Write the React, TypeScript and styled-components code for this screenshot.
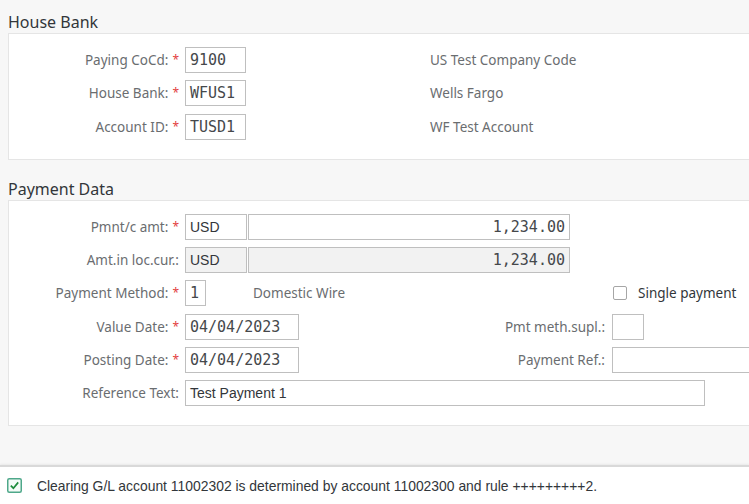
import React from 'react';
import styled, { createGlobalStyle } from 'styled-components';

const GlobalStyle = createGlobalStyle`
  html, body {
    margin: 0;
    padding: 0;
    background: #f7f7f7;
  }
`;

const Page = styled.div`
  width: 749px;
  height: 504px;
  overflow: hidden;
  display: flex;
  flex-direction: column;
  background: #f7f7f7;
  font-family: 'Noto Sans', 'Liberation Sans', sans-serif;
`;

const Content = styled.div`
  width: 860px;
  padding-left: 8px;
`;

const SectionTitle = styled.h2<{ $first?: boolean }>`
  margin: ${({ $first }) => ($first ? '12px 0 1px' : '19px 0 1px')};
  height: 20px;
  line-height: 20px;
  font-size: 16px;
  font-weight: 400;
  color: #32363a;
`;

const Panel = styled.div`
  background: #ffffff;
  border: 1px solid #e5e5e5;
  padding: 13px 0 19px;
  display: flex;
  flex-direction: column;
  gap: 7.33px;
`;

const FormRow = styled.div<{ $cols: string }>`
  display: grid;
  grid-template-columns: ${({ $cols }) => $cols};
  align-items: center;
  height: 26px;
`;

const Label = styled.div<{ $required?: boolean; $pad?: number }>`
  text-align: right;
  padding-right: ${({ $pad }) => $pad ?? 6}px;
  font-size: 13.5px;
  color: #6a6d70;
  white-space: nowrap;

  ${({ $required }) =>
    $required &&
    `
    &::after {
      content: '*';
      display: inline-block;
      font-size: 12px;
      color: #e34040;
      margin-left: 4px;
      transform: translateY(-1px);
    }
  `}
`;

const Input = styled.div<{ $w: number; $mono?: boolean; $gray?: boolean; $right?: boolean }>`
  box-sizing: border-box;
  width: ${({ $w }) => $w}px;
  height: 26px;
  border: 1px solid #bfbfbf;
  background: ${({ $gray }) => ($gray ? '#f2f2f2' : '#ffffff')};
  padding: 0 4px;
  display: flex;
  align-items: center;
  justify-content: ${({ $right }) => ($right ? 'flex-end' : 'flex-start')};
  font-family: ${({ $mono }) =>
    $mono ? "'DejaVu Sans Mono', monospace" : "'Liberation Sans', Arial, sans-serif"};
  font-size: ${({ $mono }) => ($mono ? '15px' : '14px')};
  color: ${({ $mono }) => ($mono ? '#45484b' : '#32363a')};
  white-space: nowrap;
`;

const FieldGroup = styled.div<{ $span?: boolean; $gap?: number }>`
  display: flex;
  align-items: center;
  gap: ${({ $gap }) => $gap ?? 0}px;
  ${({ $span }) => $span && 'grid-column: 2 / -1;'}
`;

const Description = styled.span<{ $offset?: number }>`
  font-size: 13.5px;
  color: #6a6d70;
  margin-left: ${({ $offset }) => $offset ?? 0}px;
  white-space: nowrap;
`;

const CheckField = styled.label`
  display: flex;
  align-items: center;
  gap: 11px;
  margin-left: 1px;
  font-size: 13.5px;
  color: #32363a;
  white-space: nowrap;
`;

const CheckBox = styled.span`
  box-sizing: border-box;
  width: 14px;
  height: 14px;
  border: 1px solid #a6a6a6;
  border-radius: 2px;
  background: #fff;
`;

const Spacer = styled.div`
  flex: 1;
`;

const MessageBar = styled.div`
  height: 37px;
  border-top: 2px solid #d9d9d9;
  box-shadow: 0 -1px 2px rgba(0, 0, 0, 0.06);
  background: #ffffff;
  display: flex;
  align-items: center;
  gap: 15px;
  padding-left: 7px;
  font-family: 'Liberation Sans', Arial, sans-serif;
  font-size: 13.9px;
  color: #32363a;
`;

const SuccessIcon = () => (
  <svg width="15" height="15" viewBox="0 0 15 15">
    <rect x="0.75" y="0.75" width="13.5" height="13.5" rx="1.5" fill="#f4fbf7" stroke="#4ea88a" strokeWidth="1.5" />
    <path d="M3.8 7.6 L6.4 10.2 L11.2 4.4" fill="none" stroke="#1d8c3c" strokeWidth="1.7" />
  </svg>
);

const bankCols = '176px 245px 1fr';
const payCols = '176px 250px 177px 1fr';

interface BankRow {
  label: string;
  value: string;
  description: string;
}

const bankRows: BankRow[] = [
  { label: 'Paying CoCd:', value: '9100', description: 'US Test Company Code' },
  { label: 'House Bank:', value: 'WFUS1', description: 'Wells Fargo' },
  { label: 'Account ID:', value: 'TUSD1', description: 'WF Test Account' },
];

const App: React.FC = () => {
  return (
    <Page>
      <GlobalStyle />
      <Content>
        <SectionTitle $first>House Bank</SectionTitle>
        <Panel>
          {bankRows.map((row) => (
            <FormRow key={row.label} $cols={bankCols}>
              <Label $required>{row.label}</Label>
              <Input $w={61} $mono>
                {row.value}
              </Input>
              <Description>{row.description}</Description>
            </FormRow>
          ))}
        </Panel>

        <SectionTitle>Payment Data</SectionTitle>
        <Panel>
          <FormRow $cols={payCols}>
            <Label $required>Pmnt/c amt:</Label>
            <FieldGroup $span $gap={1}>
              <Input $w={62}>USD</Input>
              <Input $w={322} $mono $right>
                1,234.00
              </Input>
            </FieldGroup>
          </FormRow>

          <FormRow $cols={payCols}>
            <Label>Amt.in loc.cur.:</Label>
            <FieldGroup $span $gap={1}>
              <Input $w={62} $gray>
                USD
              </Input>
              <Input $w={322} $mono $gray $right>
                1,234.00
              </Input>
            </FieldGroup>
          </FormRow>

          <FormRow $cols={payCols}>
            <Label $required>Payment Method:</Label>
            <FieldGroup>
              <Input $w={21} $mono>
                1
              </Input>
              <Description $offset={47}>Domestic Wire</Description>
            </FieldGroup>
            <div />
            <CheckField>
              <CheckBox />
              Single payment
            </CheckField>
          </FormRow>

          <FormRow $cols={payCols}>
            <Label $required>Value Date:</Label>
            <Input $w={114} $mono>
              04/04/2023
            </Input>
            <Label $pad={7}>Pmt meth.supl.:</Label>
            <Input $w={32} />
          </FormRow>

          <FormRow $cols={payCols}>
            <Label $required>Posting Date:</Label>
            <Input $w={114} $mono>
              04/04/2023
            </Input>
            <Label $pad={7}>Payment Ref.:</Label>
            <Input $w={200} />
          </FormRow>

          <FormRow $cols={payCols}>
            <Label>Reference Text:</Label>
            <FieldGroup $span>
              <Input $w={520}>Test Payment 1</Input>
            </FieldGroup>
          </FormRow>
        </Panel>
      </Content>
      <Spacer />
      <MessageBar>
        <SuccessIcon />
        Clearing G/L account 11002302 is determined by account 11002300 and rule +++++++++2.
      </MessageBar>
    </Page>
  );
};

export default App;
